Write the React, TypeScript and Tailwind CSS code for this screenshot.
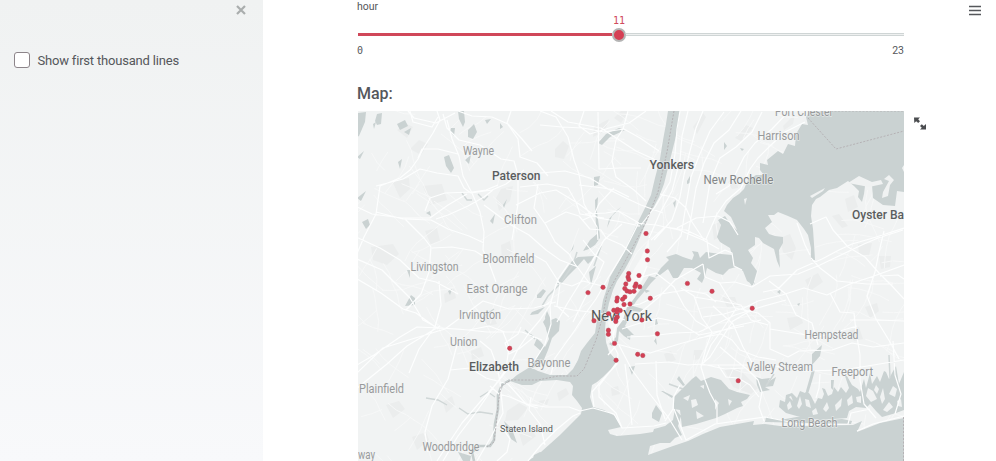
import React from "react";

const roads: string[] = [
  // Northern New Jersey highways
  "M408 111L414 118L436 123L455 113",
  "M437 111L440 120L433 133L424 147L418 159L410 170L400 178L380 186L376 214L364 237L356 256",
  "M410 111L413 122L432 127L438 117",
  "M443 114L447 128L459 140L480 145L501 159L514 161L518 175L518 204L516 216L512 240",
  "M447 120L452 139L459 156L463 176L472 193L480 212L484 232L483 250L489 263L496 282",
  "M376 186L403 179L420 169L437 173L458 176L464 188L471 193L492 190L506 184L524 170",
  "M418 158L422 149L438 149L458 154",
  "M425 211L430 198L445 193L472 192L486 190L498 185",
  "M349 203L372 214L402 218L430 218L448 205L467 194",
  "M376 212L403 219L431 220L448 229L469 236L484 243",
  "M405 219L424 238L431 247L429 272L421 294L406 310",
  "M356 237L380 248L400 260L419 278L436 282L458 294",
  "M432 248L452 247L475 251L494 263",
  "M436 219L448 215L468 206L484 197L493 190",
  "M484 205L511 225L529 235L546 250L560 260L578 267",
  "M458 111L472 116L492 117L508 124L522 139L532 151",
  "M511 111L507 123L518 139L520 157L537 163L548 176",
  "M516 205L540 193L556 190L579 204L598 218L622 222L640 226",
  "M540 111L556 117L568 137L574 160L579 174L584 204L597 227L598 240",
  "M520 187L547 184L568 188L576 202L580 214L604 218",
  "M538 184L534 208L546 225L555 242L569 254L575 264L590 284",
  "M540 173L565 171L590 178L608 189L628 199L641 205L663 213",
  "M545 223L566 212L579 216L590 229L601 230L606 238L622 245L632 254",
  "M540 125L562 127L583 128L604 132L624 129L640 138L659 151",
  "M551 111L568 122L601 128L636 151L660 162",
  "M584 111L579 126L590 134L609 128L629 123L646 111",
  "M628 111L623 129L616 140L612 161L616 177L634 190L646 201",
  "M598 112L599 169L620 168L641 168",
  "M579 185L603 188L615 190L629 197",
  "M614 188L599 204L594 215L583 220",
  "M585 214L606 213L618 211L639 223",
  // Newark and Union
  "M350 256L382 270L410 298L423 320L438 328L458 329L487 332L504 332L522 332L542 340",
  "M352 276L381 293L403 309L416 313L438 329",
  "M350 369L374 355L400 337L417 327L440 328L469 330L489 326L505 332",
  "M356 389L387 364L407 346L430 332L440 326",
  "M357 373L383 348L412 339L445 329L483 301L509 309L534 308L556 302",
  "M439 281L441 305L435 327L419 349L409 373",
  "M458 341L448 379L432 406L425 432L428 452",
  "M450 370L470 368L486 378L508 384L527 405L538 408",
  "M480 341L491 350L497 366L500 382L503 413L492 435L477 461",
  "M503 332L509 347L506 369L497 383L480 402L462 423L448 444L437 461",
  "M552 302L540 320L529 333L518 349L508 369L495 385L477 411L458 436L443 461",
  "M556 284L550 306L551 324L545 344L535 360",
  "M521 327L518 334L505 343L509 354L519 349L534 337",
  "M490 386L499 394L510 397L526 404L546 407L569 407L580 411L593 408L614 414L622 428L654 426L666 423",
  "M531 397L529 410L540 424L545 445",
  "M580 413L573 416L556 430L541 445L528 461",
  "M503 429L510 439L507 452L497 461",
  // Hudson county
  "M638 224L624 252L608 278L596 299L585 314L575 330L555 358L551 374",
  "M622 224L604 240L592 262L580 283L567 304L557 322",
  "M583 240L594 254L604 262L597 278L585 298L573 322",
  "M557 282L572 286L583 281L606 287",
  "M554 306L573 310L590 312L609 315L625 320",
  "M569 263L558 279L551 301L544 306",
  "M532 254L546 262L560 284L557 306L569 317",
  // Bronx and Westchester
  "M680 111L677 129L675 154L670 182L655 207L641 225",
  "M688 111L682 136L680 160L672 191L660 213L649 238",
  "M703 111L696 128L690 151L684 175L680 197L672 220L654 240",
  "M724 112L710 131L699 156L691 177L685 211L681 236L667 252",
  "M741 111L729 130L714 143L704 163L696 188L692 212L687 240",
  "M762 112L752 132L736 147L720 158L710 182L706 206L703 223",
  "M789 111L772 129L755 143L744 157L736 173L729 186L716 194",
  "M805 122L785 132L771 145L758 158L750 169L741 188L726 201L717 214L706 239",
  "M635 223L656 225L679 230L703 240L719 249",
  "M677 228L696 218L718 216L730 222L738 235",
  "M660 194L675 198L686 208L692 222L704 240",
  "M651 240L665 227L686 230L707 240L709 258L725 250L732 253L734 266L742 270",
  // Queens and Brooklyn
  "M647 266L641 280L626 301L618 318L613 335L615 347L608 355",
  "M635 279L656 273L674 287L684 306L696 321L708 328",
  "M624 307L640 304L661 294L685 290L706 294L716 302",
  "M635 317L658 298L675 280L703 264",
  "M622 329L637 324L658 318L678 322L699 335L714 332L744 326",
  "M627 337L650 336L675 333L699 332L712 326L735 315L761 307L786 300",
  "M617 344L650 353L679 344L704 337L735 326L761 320",
  "M619 345L632 370L649 393L668 417L682 440",
  "M609 337L618 354L617 364L604 378L592 392L594 407",
  "M618 361L599 386L599 397L616 413L622 428",
  "M625 364L628 388L632 425",
  "M635 364L669 362L688 365L702 364L725 369L745 368",
  "M656 361L657 395L665 419",
  "M681 288L694 296L702 318L712 332L706 348L701 367L705 380L710 393L717 406L717 423",
  "M703 264L705 277L720 283L735 282L752 287L770 276L798 274L820 265L843 254L864 244L878 238L903 230",
  "M719 282L735 308L758 313L770 323L770 349L788 357L799 351L832 350L852 343L873 347L904 343",
  "M694 297L719 301L741 305L751 320L768 325",
  "M703 317L724 314L744 308L758 301L782 295L804 288L827 295L850 284L874 276L904 265",
  "M736 309L722 330L711 345L704 362",
  "M753 309L733 321L720 341L710 357L701 365L738 365L770 365L804 371L843 370L904 360",
  "M699 338L721 334L732 340L740 350L758 357L776 360",
  "M720 347L733 358L748 370L758 380L762 392L759 407L764 421",
  "M718 365L726 377L738 378L750 385L759 397",
  "M713 306L733 324L743 347L753 364",
  "M811 258L820 268L837 281L867 284L893 284",
  "M810 224L826 217L833 230L848 247L865 257L879 273L892 286L904 299",
  "M904 228L873 238L852 244L839 250L822 259L797 270L778 289L763 292",
  "M884 231L879 252L875 272L867 296L876 319L890 342L899 359",
  "M880 276L898 275L904 279",
  "M830 293L840 312L854 313L856 331L860 355L860 380L864 404L876 418",
  "M850 320L877 320L904 321",
  "M893 341L895 375L901 394L895 414",
  "M820 374L819 388L816 398",
  "M770 329L819 337L857 326",
  "M680 385L674 396L673 409L665 421",
  "M674 409L686 440L715 424L765 417L805 425L848 424L851 413L870 409",
  "M857 431L873 424L904 416",
  "M769 281L786 294L796 315L812 323L818 345",
  "M797 223L805 245L810 255",
];

const landPatches: string[] = [
  "M397 130l8-7 8 4-6 11zM410 149l9-9 9 4-7 11zM392 181l17-3 1 11-10 9zM423 186l19-2 5 16-17 5zM501 189l12-3-3 15-11 10-3-13z",
  "M371 247l22-3 6 10-12 11-14-5zM425 231l12-3 3 13-9 4zM501 245l9-4 2 12-10 7zM444 294l10-5 2 9-11 5z",
  "M555 149l8-8 6 5-5 13-9-2zM594 127l15-8-4 12-12 6zM621 111l8 0-8 12-7-5zM693 127l10-14 3 4-9 17z",
  "M735 138l11-13 7 3-12 13zM783 126l12-12-2 10-9 6zM728 182l8-6 2 12-6 1zM712 225l8-3 2 14-8 4z",
  "M780 238l10-4 6 14-4 12-9-8zM832 216l7-2 9 12-6 2zM845 199l9-4 4 12-10 5zM858 244l14-1-3 13-10-1zM879 256l12 0-1 11-9 2z",
  "M722 297l13 0 3 9-11 1zM805 280l13-7 5 9-13 9zM865 307l12-4 2 8-9 7zM849 331l10-4 4 12-9 2zM787 318l14-2 2 7-13 7z",
  "M724 369l14-1 20 20-7 6-18-7zM611 388l7-2 2 8-8 2zM664 354l7-3 5 9-9 3zM694 350l9 0-2 9-8 1z",
  "M443 402l9-6 3 9-9 8zM386 405l13-4 6 8-12 9zM412 437l14-5 3 8-12 10zM507 411l12-8 9 5-10 12-13 1z",
  "M519 433l11-5 6 8-13 10zM557 393l9-5 3 6-10 7zM539 401l10-2-2 6-9 1zM483 312l9 0 5 12-11 2zM471 351l10-4 3 9-12 4z",
];

// Local streets: short wandering lines whose bearing follows each borough's grid.
const minorRoads: string[] = (() => {
  let seed = 4271;
  const rand = () => {
    seed = (seed * 16807) % 2147483647;
    return seed / 2147483647;
  };
  const out: string[] = [];
  for (let i = 0; i < 330; i++) {
    let x = 350 + rand() * 560;
    let y = 105 + rand() * 360;
    const base = x > 610 && y < 250 ? 1.9 : x > 610 ? 0.25 : 0.8;
    let a = base + (rand() > 0.5 ? Math.PI / 2 : 0) + (rand() - 0.5) * 0.7;
    let d = `M${x.toFixed(1)} ${y.toFixed(1)}`;
    const n = 2 + Math.floor(rand() * 4);
    for (let k = 0; k < n; k++) {
      a += (rand() - 0.5) * 0.6;
      x += Math.cos(a) * 11;
      y += Math.sin(a) * 11;
      d += `L${x.toFixed(1)} ${y.toFixed(1)}`;
    }
    out.push(d);
  }
  return out;
})();

const water: string[] = [
  // Hudson River, Upper Bay and the Atlantic
  "M668 111L680 111L677 132L672 152L668 168L664 184L659 197L650 214L645 225L638 242L631 258L625 269L617 281L613 290L609 303L606 317L605 330L606 342L609 352L617 361L611 369L603 377L597 382L592 385L590 397L593 407L604 410L615 416L621 427L608 430L610 434L617 436L640 434L653 432L654 429L665 426L673 420L675 409L681 416L678 426L682 435L675 438L670 443L660 443L650 446L648 455L673 446L688 441L703 434L720 427L754 421L753 425L765 424L780 426L853 425L862 421L857 432L880 423L904 418L904 461L528 461L541 452L560 435L581 414L582 408L577 401L572 395L573 386L570 382L557 380L540 381L532 385L522 385L510 381L517 375L530 367L538 371L550 375L567 375L573 369L578 360L581 351L587 343L595 333L597 320L601 312L603 300L607 288L610 277L621 258L629 241L637 224L645 208L651 195L655 178L660 159L663 140L666 124Z",
  // Newark Bay
  "M545 317L547 311L551 320L556 318L560 321L559 331L552 338L548 350L543 362L531 369L535 360L541 351L534 345L537 338L530 336L531 334L541 342L545 347L549 339L546 329Z",
  // Long Island Sound
  "M810 111L904 111L904 165L902 168L904 172L904 192L897 191L895 206L883 205L873 198L872 185L865 186L864 194L862 202L858 197L859 191L854 186L848 181L837 188L829 190L820 197L816 199L812 205L811 216L813 229L814 244L815 260L811 260L811 248L808 235L804 229L797 220L788 216L778 212L774 215L768 215L772 222L765 228L769 234L775 236L783 237L783 243L779 250L780 268L777 261L774 249L763 243L759 238L755 237L755 245L748 250L753 258L751 263L757 271L753 285L747 281L743 271L736 267L729 269L723 275L716 273L707 268L705 276L702 283L697 279L701 273L692 268L684 268L678 278L673 278L668 269L660 275L655 277L661 268L669 260L666 257L676 254L683 257L692 260L694 255L692 251L698 252L700 258L706 252L713 253L721 254L732 255L730 248L720 242L717 237L721 225L718 220L725 216L731 225L737 230L731 217L724 211L727 205L733 198L739 194L744 189L748 180L756 175L764 175L760 170L760 163L768 165L767 160L778 151L783 154L788 144L795 146L796 134L802 124L808 125L806 117Z",
  // Jamaica Bay
  "M701 381L711 377L721 380L729 389L737 392L750 395L747 399L741 402L743 406L737 408L725 414L716 418L696 424L682 427L680 410L674 409L674 397L684 387L692 379L696 376Z",
  // South shore bays with their creeks
  "M780 400L785 402L786 395L792 393L797 398L800 391L805 393L807 390L811 396L815 404L818 398L822 399L824 394L822 388L825 389L828 396L832 394L834 387L838 392L841 387L846 393L849 388L845 376L847 376L852 385L858 389L860 392L864 379L866 388L870 373L872 384L877 376L880 382L884 371L886 372L889 379L892 373L896 366L899 384L904 372L904 410L896 413L882 417L876 411L870 404L866 408L856 407L849 411L847 418L820 420L800 417L786 413L779 407Z",
  "M756 377L762 379L770 378L768 382L776 377L773 386L765 387L770 390L760 392L757 385Z",
  "M812 370L815 370L812 381L808 394L806 391ZM812 354L822 345L820 356L812 365ZM831 380L834 380L833 390L831 388Z",
  "M766 417L780 420L802 416L815 421L842 419L852 421L851 424L765 422Z",
  // Lakes and reservoirs
  "M357 113L366 112L365 122L359 136L357 137ZM377 114L382 113L381 124L377 125L375 121ZM397 124L405 120L408 126L400 130ZM404 132L411 128L409 135Z",
  "M458 111L464 111L465 122L463 127L459 119ZM468 130L474 124L477 132L473 139L468 137ZM485 120L491 119L487 124ZM500 123L503 127L500 129ZM451 128L455 128L454 136L450 132Z",
  "M444 157L449 155L454 168L451 173L446 166ZM465 160L471 155L469 164ZM398 162L402 159L400 169ZM357 157L364 151L360 159ZM373 124L376 122L374 129Z",
  "M357 198L366 191L361 201ZM362 222L368 219L370 225L366 229ZM503 205L507 199L504 208ZM490 221L495 214L493 224ZM426 213L430 211L431 216Z",
  "M598 143L606 134L619 128L625 130L610 137L602 145ZM609 219L616 211L621 207L612 216L607 228ZM594 177L600 176L598 185L594 186Z",
  "M595 200L598 197L597 212L599 227L600 238L595 245L589 249L583 251L590 240L597 234L596 228Z",
  "M556 284L565 271L572 261L578 257L594 256L591 261L588 264L584 259L576 268L568 276L561 284Z",
  "M571 251L574 244L573 249L567 256ZM589 272L596 266L593 277L591 285ZM543 322L548 315L546 328ZM405 306L411 295L415 298L415 305ZM448 291L452 289L450 295Z",
  "M537 295L543 289L546 291L541 298L537 298ZM532 312L545 307L538 314L530 315ZM407 270L410 270L410 278Z",
  "M673 203L676 200L675 208ZM687 181L690 176L690 183L687 184ZM724 142L727 146L724 150ZM740 148L744 149L742 151ZM746 272L753 279L755 285Z",
  "M747 279L753 279L752 286ZM777 292L781 289L780 294ZM797 304L800 303L799 306Z",
  // East River and its creeks
  "M649 276L656 278L651 283L644 292L637 300L633 306L643 309L642 312L632 311L629 318L625 326L634 335L625 335L619 331L618 341L612 346L609 344L616 337L617 328L623 320L627 307L633 300L641 289Z",
  "M619 331L631 332L630 340L624 336ZM656 317L658 324L655 325ZM629 367L635 366L632 375ZM656 338L657 345L654 341ZM643 288L650 291L646 293Z",
  "M504 421L512 429L517 443L511 439L507 430ZM532 461L534 455L540 452L548 454L541 461ZM458 452L471 456L470 461L463 461Z",
  "M652 413L656 405L662 413L659 422L652 418ZM677 379L679 376L685 385L683 386ZM661 391L663 391L673 396L672 398Z",
];

const islands: string[] = [
  "M683 398L690 395L688 401ZM691 400L696 399L698 405L692 408ZM700 386L704 385L704 389ZM696 411L704 416L697 419ZM715 399L719 403L715 410ZM728 399L732 401L729 406Z",
  "M787 405L790 401L792 407L788 410ZM797 406L800 396L802 404L799 409ZM805 399L809 400L811 408L806 406ZM812 411L816 408L818 414L813 415ZM823 409L827 402L829 408L826 412Z",
  "M835 405L842 398L841 406L836 411ZM847 400L852 395L853 403L848 406ZM866 396L868 388L873 391L877 399L871 402ZM880 397L883 388L885 399L882 404ZM883 410L889 402L893 407L887 412Z",
  "M889 394L893 386L897 389L895 397ZM897 401L901 399L902 407L898 406ZM856 397L861 396L861 403L857 402ZM876 385L879 389L877 394L874 390ZM789 397L791 396L793 401Z",
  "M883 192L889 181L884 179L889 175L894 180L890 185L888 196L882 198ZM848 183L859 176L872 182L881 180L883 184L869 187Z",
  "M802 122L805 116L806 124ZM810 196L825 188L823 191L812 198ZM744 199L747 198L745 205Z",
];

const labels: [string, number, number, number, string][] = [
  // text, left edge, baseline, width, tone
  ["Wayne", 463, 155, 31, "soft"],
  ["Paterson", 492, 180, 48.5, "city"],
  ["Clifton", 504, 224, 33, "soft"],
  ["Bloomfield", 482.5, 263, 52, "soft"],
  ["Livingston", 410.5, 271, 48, "soft"],
  ["East Orange", 466.5, 293, 61, "soft"],
  ["Irvington", 459, 319, 42, "soft"],
  ["Union", 450, 345.5, 27.5, "soft"],
  ["Elizabeth", 469, 371, 50, "city"],
  ["Bayonne", 527.5, 367, 43, "soft"],
  ["Plainfield", 359, 393, 45, "soft"],
  ["Staten Island", 500, 432, 53, "small"],
  ["Woodbridge", 422.5, 450.5, 57, "soft"],
  ["way", 358, 459, 17, "soft"],
  ["Yonkers", 649.5, 169, 44.5, "city"],
  ["New Rochelle", 703.5, 184, 70, "mid"],
  ["Harrison", 757.5, 140, 42, "soft"],
  ["Port Chester", 775, 116, 58, "soft"],
  ["Oyster Ba", 852, 218.5, 52, "city"],
  ["Hempstead", 804.5, 339, 54, "soft"],
  ["Valley Stream", 747, 370.5, 66, "soft"],
  ["Freeport", 831.5, 375.5, 41.5, "soft"],
  ["Long Beach", 781.5, 427, 56, "soft"],
  ["New York", 591, 321, 61, "big"],
];

const labelStyles: Record<string, string> = {
  soft: "fill-[#989a9b] text-[12px]",
  mid: "fill-[#838687] text-[12px]",
  city: "fill-[#5a5d5e] text-[12px] font-medium",
  small: "fill-[#56595a] text-[9px]",
  big: "fill-[#56595a] text-[15.5px]",
};

const points: [number, number][] = [
  [646, 233.5], [647.3, 251], [647.5, 259.8], [628.7, 273.5], [628, 277], [628.8, 279.5], [639, 275.5],
  [625.8, 284], [636, 284], [635, 286.5], [639.8, 286.8], [624.8, 288.5], [627, 291], [630, 291.8], [634, 291.3],
  [687.4, 283.4], [712, 291.3], [752.2, 308.3], [650.3, 298.3], [588, 292.6], [603, 287.3],
  [617.3, 298], [616.8, 301], [624.8, 297], [622.6, 299.3], [624, 304.5], [630, 304], [608.5, 313.6],
  [613.8, 310.2], [617.5, 309.5], [620.3, 310.5], [617.3, 317], [615.8, 319], [615.8, 321.5], [616.8, 312],
  [594, 320.7], [641.9, 320], [657.4, 333.8], [608.4, 330.2], [608.4, 334.3], [614.5, 343.4],
  [616.1, 360.2], [637.7, 354.3], [642.8, 355.5], [738.2, 380.7], [509.7, 348.3],
];

function CityMap() {
  return (
    <svg viewBox="358 111 546 350" width="546" height="350" className="block" fontFamily="Roboto, 'Open Sans', sans-serif">
      <rect x="358" y="111" width="546" height="350" fill="#f1f3f3" />
      <path d={landPatches.join("")} fill="#ebeded" />
      <path d={minorRoads.join("")} fill="none" stroke="#f7f8f8" strokeWidth="0.9" />
      <path d="M649 238L641 258L623 287L615 303L608 323L613 338L622 324L632 304L643 279L649 260Z" fill="#f8f9f9" />
      <path d={water.join("")} fill="#cad2d2" />
      <path d={islands.join("")} fill="#f0f2f2" />
      <path
        d="M510 380L502 385L498 395L498 409L495 424L494 440L490 446L479 446L472 452L474 461"
        fill="none"
        stroke="#c6cece"
        strokeWidth="2.6"
      />
      <path
        d="M495 397L488 392L480 397M459 408L468 414L480 412L493 414M426 398L438 400L447 405M483 317L494 309M525 330L535 339M462 193L467 200L472 200M478 194L484 200L488 196"
        fill="none"
        stroke="#d0d7d7"
        strokeWidth="1.4"
      />
      <path
        d="M601 246L594 266M577 252L573 265L562 281M889 355L890 378M669 384L683 389M774 374L766 386M560 284L548 296L542 306"
        fill="none"
        stroke="#d0d7d7"
        strokeWidth="1.5"
      />
      <path d={roads.join("")} fill="none" stroke="#fdfefe" strokeWidth="1.2" strokeLinejoin="round" />
      <path
        d="M674 111L667 152L658 192L646 222L634 245L616 278L607 294L602 319L596 340L584 369L577 376L558 376L538 380L511 380L501 386L498 405L496 426L494 442L487 447M808 118L836 149L904 131M810 111H904M903.5 417V461"
        fill="none"
        stroke="#b0a9ad"
        strokeWidth="0.8"
        strokeDasharray="2 1.5"
      />
      {labels.map(([text, x, y, w, tone]) => (
        <text
          key={text}
          x={x}
          y={y}
          textLength={w}
          lengthAdjust="spacingAndGlyphs"
          className={labelStyles[tone]}
          stroke="#f3f5f5"
          strokeOpacity="0.6"
          strokeWidth="1.4"
          paintOrder="stroke"
        >
          {text}
        </text>
      ))}
      {points.map(([x, y], i) => (
        <circle key={i} cx={x} cy={y} r="2.2" fill="#d53f54" stroke="#b04a58" strokeWidth="0.5" />
      ))}
    </svg>
  );
}

export default function App() {
  return (
    <div className="flex h-[461px] w-[996px] overflow-hidden bg-white font-['Roboto','Open_Sans',sans-serif] text-[#55575b]">
      <aside className="flex w-[263px] shrink-0 flex-col bg-linear-to-b from-[#f0f2f2] to-[#f8f9fb]">
        <div className="flex h-[19px] items-center justify-end pr-[17px]">
          <svg width="10" height="10" viewBox="0 0 10 10" className="block">
            <path d="M1 1L9 9M9 1L1 9" stroke="#a9adad" strokeWidth="2.2" />
          </svg>
        </div>
        <label className="mt-[33px] flex items-start pl-[14px]">
          <span className="block size-4 rounded-[3px] border border-[#8d858a] bg-white" />
          <span className="ml-[7.5px] pt-px text-[13px] leading-4 tracking-[-0.19px]">Show first thousand lines</span>
        </label>
      </aside>
      <main className="flex w-[733px] pl-[95px]">
        <div className="w-[546px] shrink-0">
          <div className="-ml-px h-[14px] text-[10.5px] leading-[14px]">hour</div>
          <div className="flex h-[12px] pl-[255px] font-['DejaVu_Sans_Mono',monospace] text-[10px] leading-[13px] text-[#d04a5c]">11</div>
          <div className="flex h-[17px] items-center">
            <div className="h-[3px] w-[254px] bg-[#d04759]" />
            <div className="size-[14px] shrink-0 rounded-full border-2 border-[#b4b4b4] bg-[#d53f54]" />
            <div className="h-[3px] flex-1 border-y border-[#cfd5d5] bg-[#eef0f0]" />
          </div>
          <div className="-ml-px flex h-[14px] justify-between font-['DejaVu_Sans_Mono',monospace] text-[10px] leading-[16px]">
            <span>0</span>
            <span className="font-['Roboto',sans-serif] text-[10.5px]">23</span>
          </div>
          <h3 className="mt-[27px] -ml-px h-[27px] text-[16px] leading-[20px] font-medium">Map:</h3>
          <CityMap />
        </div>
        <div className="flex flex-1 flex-col">
          <div className="flex h-[20px] items-center justify-end pr-[15px]">
            <svg width="12" height="11" viewBox="0 0 12 11" className="block">
              <path d="M0 1.5H12M0 5.5H12M0 9.5H12" stroke="#55575b" strokeWidth="1.6" />
            </svg>
          </div>
          <svg width="12" height="13" viewBox="0 0 12 13" className="mt-[97px] ml-[10px] block">
            <path d="M0 0.5H6L4.2 2.3L6 4.2L4.2 6L2.2 4.2L0.3 6ZM12 12.5H6L7.8 10.7L6 9L7.8 7.2L9.8 9L12 7Z" fill="#4b4d50" />
          </svg>
        </div>
      </main>
    </div>
  );
}
